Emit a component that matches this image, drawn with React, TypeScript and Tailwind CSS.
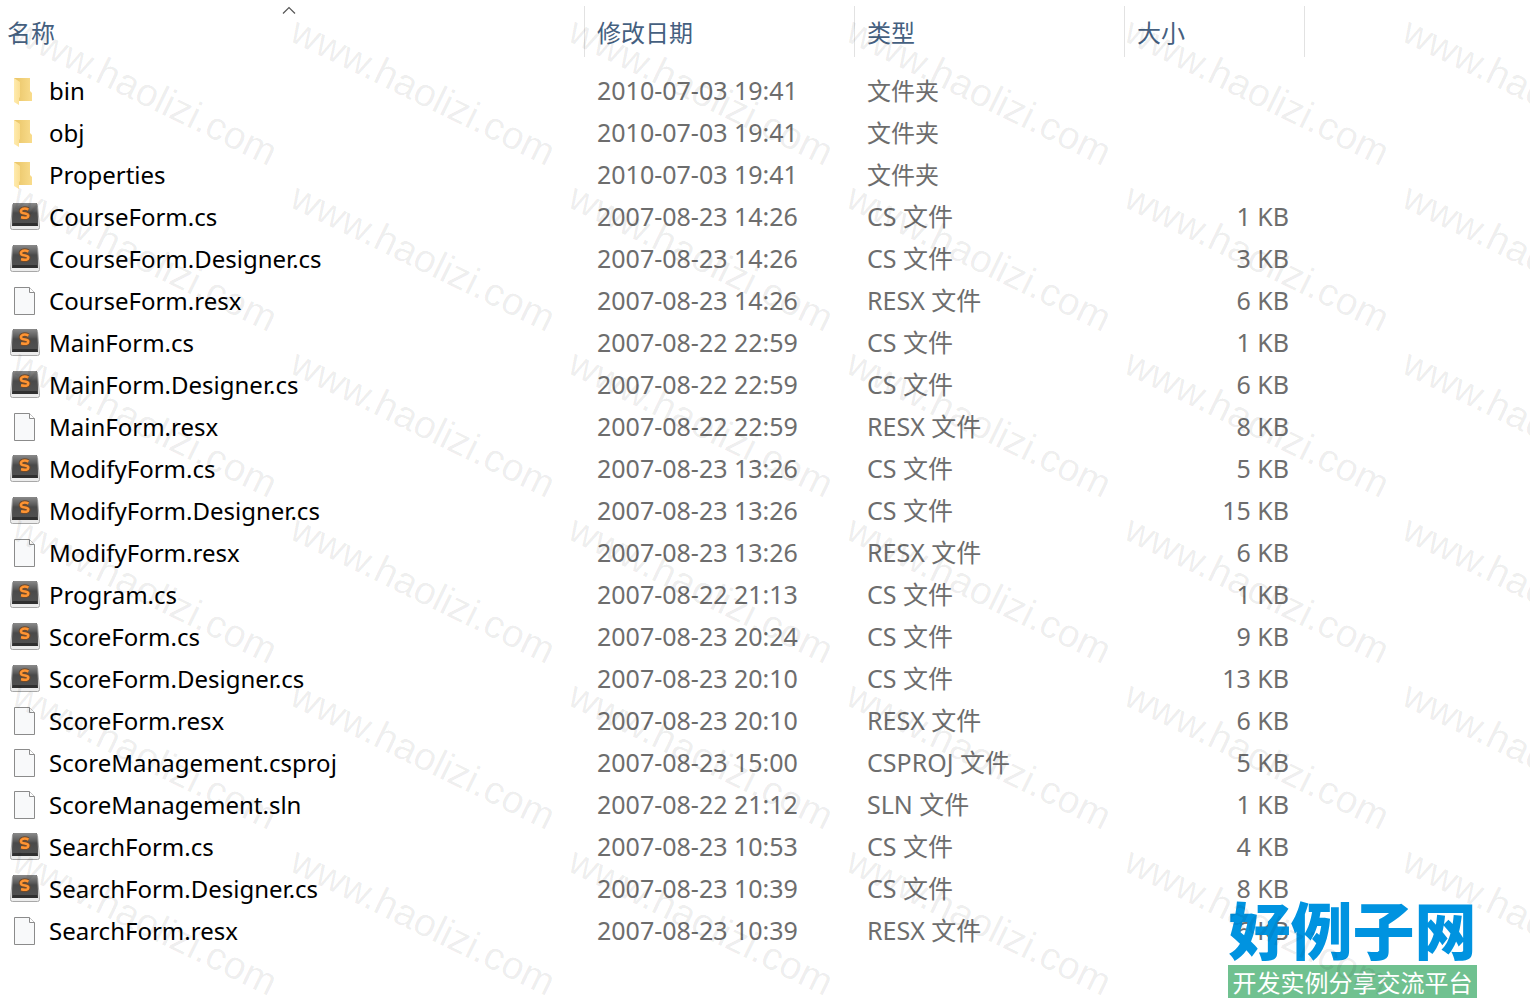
import React, { useState } from "react";

type Kind = "folder" | "cs" | "file";

interface FileRow {
  name: string;
  date: string;
  type: string;
  size: string;
  kind: Kind;
}

const files: FileRow[] = [
  { name: "bin", date: "2010-07-03 19:41", type: "文件夹", size: "", kind: "folder" },
  { name: "obj", date: "2010-07-03 19:41", type: "文件夹", size: "", kind: "folder" },
  { name: "Properties", date: "2010-07-03 19:41", type: "文件夹", size: "", kind: "folder" },
  { name: "CourseForm.cs", date: "2007-08-23 14:26", type: "CS 文件", size: "1 KB", kind: "cs" },
  { name: "CourseForm.Designer.cs", date: "2007-08-23 14:26", type: "CS 文件", size: "3 KB", kind: "cs" },
  { name: "CourseForm.resx", date: "2007-08-23 14:26", type: "RESX 文件", size: "6 KB", kind: "file" },
  { name: "MainForm.cs", date: "2007-08-22 22:59", type: "CS 文件", size: "1 KB", kind: "cs" },
  { name: "MainForm.Designer.cs", date: "2007-08-22 22:59", type: "CS 文件", size: "6 KB", kind: "cs" },
  { name: "MainForm.resx", date: "2007-08-22 22:59", type: "RESX 文件", size: "8 KB", kind: "file" },
  { name: "ModifyForm.cs", date: "2007-08-23 13:26", type: "CS 文件", size: "5 KB", kind: "cs" },
  { name: "ModifyForm.Designer.cs", date: "2007-08-23 13:26", type: "CS 文件", size: "15 KB", kind: "cs" },
  { name: "ModifyForm.resx", date: "2007-08-23 13:26", type: "RESX 文件", size: "6 KB", kind: "file" },
  { name: "Program.cs", date: "2007-08-22 21:13", type: "CS 文件", size: "1 KB", kind: "cs" },
  { name: "ScoreForm.cs", date: "2007-08-23 20:24", type: "CS 文件", size: "9 KB", kind: "cs" },
  { name: "ScoreForm.Designer.cs", date: "2007-08-23 20:10", type: "CS 文件", size: "13 KB", kind: "cs" },
  { name: "ScoreForm.resx", date: "2007-08-23 20:10", type: "RESX 文件", size: "6 KB", kind: "file" },
  { name: "ScoreManagement.csproj", date: "2007-08-23 15:00", type: "CSPROJ 文件", size: "5 KB", kind: "file" },
  { name: "ScoreManagement.sln", date: "2007-08-22 21:12", type: "SLN 文件", size: "1 KB", kind: "file" },
  { name: "SearchForm.cs", date: "2007-08-23 10:53", type: "CS 文件", size: "4 KB", kind: "cs" },
  { name: "SearchForm.Designer.cs", date: "2007-08-23 10:39", type: "CS 文件", size: "8 KB", kind: "cs" },
  { name: "SearchForm.resx", date: "2007-08-23 10:39", type: "RESX 文件", size: "6 KB", kind: "file" },
];

const columns = [
  { label: "名称", width: "w-[585px]", pad: "pl-[7px]" },
  { label: "修改日期", width: "w-[270px]", pad: "pl-3" },
  { label: "类型", width: "w-[270px]", pad: "pl-3" },
  { label: "大小", width: "w-[180px]", pad: "pl-3" },
];

const FolderIcon = () => (
  <svg width="30" height="28" viewBox="0 0 30 28" aria-hidden="true">
    <defs>
      <linearGradient id="folderBack" x1="0" x2="1">
        <stop offset="0" stopColor="#e9c466" />
        <stop offset="1" stopColor="#f9dc8c" />
      </linearGradient>
      <linearGradient id="folderFront" x1="0" x2="1">
        <stop offset="0" stopColor="#ffebae" />
        <stop offset="1" stopColor="#fbdf93" />
      </linearGradient>
    </defs>
    <path d="M4 1h16v13l2 2v8H9L4 20z" fill="url(#folderBack)" />
    <path d="M4 1l6 4v15l-1 1v7l-5-3z" fill="url(#folderFront)" />
  </svg>
);

const CsIcon = () => (
  <svg width="30" height="28" viewBox="0 0 30 28" aria-hidden="true">
    <defs>
      <linearGradient id="keyTop" x1="0" y1="0" x2="0" y2="1">
        <stop offset="0" stopColor="#8a8a8a" />
        <stop offset="0.4" stopColor="#5a5a5a" />
        <stop offset="0.5" stopColor="#4a4a4a" />
        <stop offset="1" stopColor="#505050" />
      </linearGradient>
    </defs>
    <path d="M2.500 2Q2.500.500 4.500.500h21q2 0 2 2l2 22q0 2-2 2h-25q-2 0-2-2z" fill="#ececec" stroke="#a8a8a8" />
    <path d="M3 1q0-1 1-1h22q1 0 1 1l1 22H2z" fill="#303030" />
    <path d="M3 1q0-1 1-1h22q1 0 1 1l1 19H2z" fill="url(#keyTop)" />
    <path d="M18.500 6.500Q15 5 12.500 6q-2.500 1.500-1 3.500 1 .8 3.500 1 3.500.5 3.300 2.300-.3 3-7.300 1.500" fill="none" stroke="#6e4a2c" strokeWidth="4.500" />
    <path d="M18.500 6.500Q15 5 12.500 6q-2.500 1.500-1 3.500 1 .8 3.500 1 3.500.5 3.300 2.300-.3 3-7.300 1.500" fill="none" stroke="#ff9432" strokeWidth="2.500" />
  </svg>
);

const PageIcon = () => (
  <svg width="30" height="28" viewBox="0 0 30 28" aria-hidden="true">
    <path d="M4.500.5h15l5 5v22h-20z" fill="#f8f9fa" stroke="#8b8b8b" />
    <path d="M19.500.5v5h5" fill="#fff" stroke="#8b8b8b" />
  </svg>
);

const icons = {
  folder: <FolderIcon />,
  cs: <CsIcon />,
  file: <PageIcon />,
};

const Watermark = () => (
  <div className="pointer-events-none absolute inset-0 overflow-hidden" aria-hidden="true">
    <div className="ml-[18px] mt-[14px] grid w-max grid-cols-6">
      {Array.from({ length: 36 }, (_, i) => (
        <div key={i} className="h-[166px] w-[278px]">
          <span className="block origin-top-left rotate-[26deg] whitespace-nowrap pl-1 font-['Liberation_Sans',sans-serif] text-[39px] leading-7 text-black/7">
            www.haolizi.com
          </span>
        </div>
      ))}
    </div>
  </div>
);

const SiteLogo = () => (
  <div className="absolute bottom-[10px] right-[53px] w-[249px] text-center font-['Noto_Sans_CJK_SC',sans-serif]">
    <div className="mb-[10px] whitespace-nowrap text-[62px] font-black leading-[54px] text-[#0093e0]">好例子网</div>
    <div className="whitespace-nowrap bg-[#70c190] text-[24px] leading-[33px] text-white">
      开发实例分享交流平台
    </div>
  </div>
);

export default function App() {
  const [selected, setSelected] = useState<string | null>(null);

  return (
    <main className="relative min-h-screen overflow-hidden bg-white font-['Noto_Sans','Noto_Sans_CJK_SC',sans-serif]">
      <table className="w-full table-fixed border-collapse text-left">
        <thead>
          <tr className="h-[70px] align-top">
            {columns.map((col, i) => (
              <th key={col.label} className={`${col.width} p-0 pt-[6px] font-normal`}>
                <button
                  className={`${col.pad} relative block h-[51px] w-full border-r border-[#e2e2e2] text-left font-['Noto_Sans_CJK_SC',sans-serif] text-[24px] leading-[51px] text-[#45607f]`}
                >
                  {col.label}
                  {i === 0 && (
                    <svg className="absolute left-[282px] top-0" width="14" height="8" viewBox="0 0 14 8" aria-hidden="true">
                      <path d="M1 7.500l6-6 6 6" fill="none" stroke="#555" strokeWidth="1.200" />
                    </svg>
                  )}
                </button>
              </th>
            ))}
            <td />
          </tr>
        </thead>
        <tbody className="text-[25px] leading-10 text-[#6d6d6d]">
          {files.map((file) => (
            <tr
              key={file.name}
              onClick={() => setSelected(file.name)}
              className={`h-[42px] align-top ${selected === file.name ? "bg-[#cce8ff]" : ""}`}
            >
              <td className="p-0 pl-[10px] text-[24px] text-black">
                <div className="flex h-[42px] items-center gap-[9px]">
                  <span className="shrink-0">{icons[file.kind]}</span>
                  <span>{file.name}</span>
                </div>
              </td>
              <td className="p-0 pl-3">{file.date}</td>
              <td className={`p-0 pl-3 ${file.kind === "folder" ? "text-[24px] leading-[42px]" : ""}`}>{file.type}</td>
              <td className="p-0 pr-4 text-right">{file.size}</td>
              <td />
            </tr>
          ))}
        </tbody>
      </table>
      <SiteLogo />
      <Watermark />
    </main>
  );
}
